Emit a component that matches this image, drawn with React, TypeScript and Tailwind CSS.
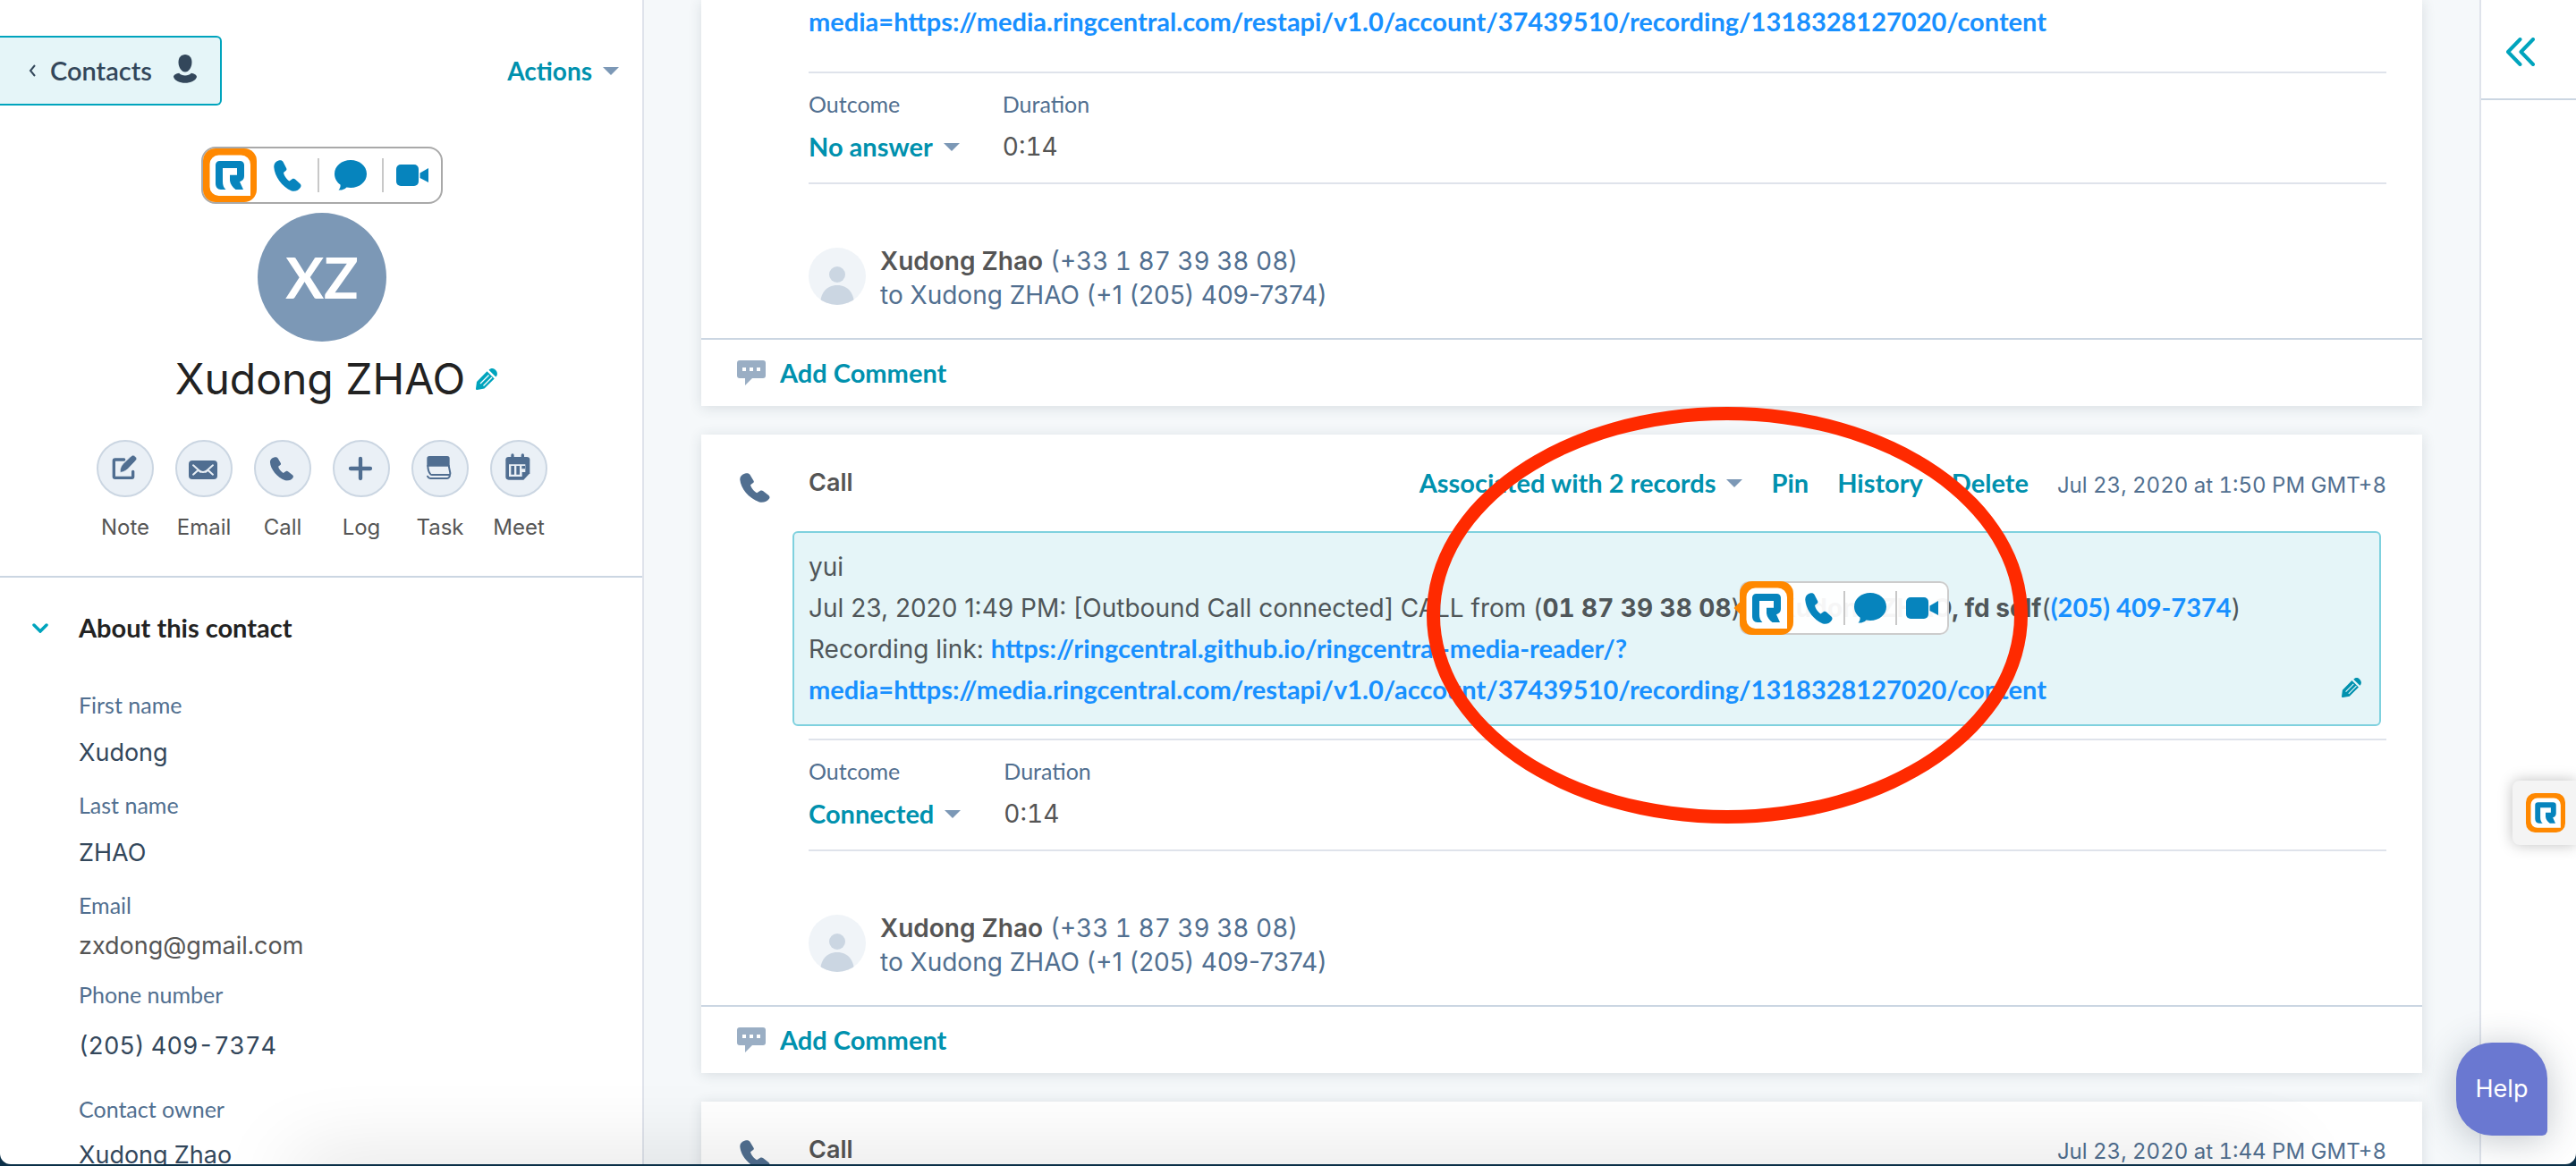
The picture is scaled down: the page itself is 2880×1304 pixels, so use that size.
import React from "react";

type IconProps = { className?: string };

const LATO = "font-['Lato',sans-serif]";

function Caret() {
  return (
    <svg viewBox="0 0 18 9" className="h-[9px] w-[18px] shrink-0 fill-[#7c98b6]" aria-hidden="true">
      <path d="M0 0h18L9 9z" />
    </svg>
  );
}

function PhoneIcon({ className }: IconProps) {
  return (
    <svg viewBox="0 0 31 35" preserveAspectRatio="none" className={className} fill="currentColor" aria-hidden="true">
      <path d="M5.5.6C2 1.8 0 4.5.3 8 1 18 9 30 20 34.5c4 1 8-.5 10-4 1-1.500.5-3-.5-4L24 21.500c-1-1-2.200-1-3-.5l-3.500 2.500c-3-2-6-6-6.500-9.500l3-2.500c.6-.7.5-1.500.2-2.300L10.500 2C9.500.2 7.500-.1 5.500.6z" />
    </svg>
  );
}

function BubbleIcon() {
  return (
    <svg viewBox="0 0 36 34" className="h-[34px] w-9" fill="currentColor" aria-hidden="true">
      <path d="M18 0c10 0 18 6.700 18 15.500S28 31 18 31c-1.600 0-3-.2-4.500-.5C11 33 8 33.800 4.500 33.500 6 32 7 29.500 6.500 27.500 2.500 24.700 0 20.500 0 15.500 0 6.700 8 0 18 0z" />
    </svg>
  );
}

function VideoIcon() {
  return (
    <svg viewBox="0 0 36 24" className="h-6 w-9" fill="currentColor" aria-hidden="true">
      <rect width="25" height="24" rx="5" />
      <path d="M26.500 9.500 36 4v16l-9.500-5z" />
    </svg>
  );
}

function RingLogo({ className }: IconProps) {
  return (
    <svg viewBox="0 0 60 60" className={className} aria-hidden="true">
      <rect width="60" height="60" rx="14" fill="#ff8800" />
      <path d="M17.500 7.500h25a10.500 10.500 0 0 1 10.500 10.500v35H17.500A10 10 0 0 1 7.500 43V17.500a10 10 0 0 1 10-10z" fill="#fff" />
      <path d="M18.500 14h23a4.500 4.500 0 0 1 4.500 4.500V31c0 3-2 5.500-5 6.200L45 46h-8.500c-3.500-2.500-6-6-6.500-10v-6.200h8V22H22v15c0 4 1 7 3.500 9H20c-4 0-6-3-6-7V18.500a4.500 4.500 0 0 1 4.500-4.500z" fill="#0684bd" />
    </svg>
  );
}

function PencilIcon({ className, line }: { className: string; line: string }) {
  return (
    <svg viewBox="0 0 24 24" className={className} fill="currentColor" aria-hidden="true">
      <path d="M1.500 24c-1 .2-1.600-.5-1.500-1.500L1 15 12.500 3.300l8.200 8.200L9.500 22.500z" />
      <path d="M14.500 1.800C16.500-.4 19.500-.6 21.700 1.600c2.700 2.400 3 5.400.6 8z" />
      <path d="M5 17 14.500 7.500M8.500 19.500 18 10" stroke={line} strokeWidth="1.300" fill="none" />
    </svg>
  );
}

function CallBar({ className, cells }: { className: string; cells: [string, string, string] }) {
  return (
    <div className={className}>
      <RingLogo className="h-[60px] w-[60px] shrink-0" />
      <button aria-label="Call with RingCentral" className={cells[0]}>
        <PhoneIcon className="h-[35px] w-[31px]" />
      </button>
      <span className="h-[38px] w-0.5 bg-[#c8c8c8]" />
      <button aria-label="Send a text message" className={cells[1]}>
        <BubbleIcon />
      </button>
      <span className="h-[38px] w-0.5 bg-[#c8c8c8]" />
      <button aria-label="Start a video meeting" className={cells[2]}>
        <VideoIcon />
      </button>
    </div>
  );
}

const actions: { label: string; art: React.ReactNode }[] = [
  {
    label: "Note",
    art: (
      <>
        <path d="M92 66H62q-4 0-4 4v53q0 4 4 4h56q4 0 4-4v-17" fill="none" stroke="currentColor" strokeWidth="10" strokeLinecap="round" strokeLinejoin="round" />
        <path d="M79 109c-1-12 3-21 9-28l24-23 6-5q5-4 9 0l6 6q4 4 0 8l-5 6-24 25c-7 6-16 10-25 11z" fill="currentColor" stroke="#eaf0f6" strokeWidth="2" />
      </>
    ),
  },
  {
    label: "Email",
    art: (
      <>
        <rect x="45" y="69" width="96" height="63" rx="12" fill="currentColor" />
        <path d="M60 85l19 17q14 12 28 0l19-17M60 116l17-15 7 6M126 116l-17-15-7 6" fill="none" stroke="#eaf0f6" strokeWidth="6" strokeLinecap="round" />
      </>
    ),
  },
  {
    label: "Call",
    art: (
      <svg x="53" y="57" width="80" height="80" viewBox="0 0 31 35" preserveAspectRatio="none">
        <path fill="currentColor" d="M5.5.6C2 1.8 0 4.5.3 8 1 18 9 30 20 34.5c4 1 8-.5 10-4 1-1.500.5-3-.5-4L24 21.500c-1-1-2.200-1-3-.5l-3.500 2.500c-3-2-6-6-6.500-9.500l3-2.500c.6-.7.5-1.500.2-2.300L10.500 2C9.500.2 7.500-.1 5.500.6z" />
      </svg>
    ),
  },
  {
    label: "Log",
    art: <path d="M60 96h66M93 63v66" stroke="currentColor" strokeWidth="13" strokeLinecap="round" />,
  },
  {
    label: "Task",
    art: (
      <>
        <path d="M60 54h60q8 0 8 8v27H52V62q0-8 8-8z" fill="currentColor" />
        <path d="M55 86c0 12 3 22 9 29q2 2 5 2h56q6 0 5-6l-5-25M54 122q3 7 9 7h56q7 0 10-9" fill="none" stroke="currentColor" strokeWidth="6" strokeLinecap="round" />
      </>
    ),
  },
  {
    label: "Meet",
    art: (
      <>
        <path d="M62 57h61q10 0 10 10v45l-21 22H62q-10 0-10-10V67q0-10 10-10z" fill="currentColor" />
        <path d="M75 51v12M109 51v12" stroke="currentColor" strokeWidth="10" strokeLinecap="round" />
        <path d="M63 82h55v26h-11v15H63z" fill="#eaf0f6" />
        <path d="M70 87h11v29H70zM88 87h11v29H88zM106 87h11v10h-11z" fill="currentColor" />
      </>
    ),
  },
];

const fields: { label: string; value: string; wrap: string; val: string }[] = [
  { label: "First name", value: "Xudong", wrap: "mt-[50px]", val: "mt-5 text-[#33475b]" },
  { label: "Last name", value: "ZHAO", wrap: "mt-6", val: "mt-5 text-[#33475b]" },
  { label: "Email", value: "zxdong@gmail.com", wrap: "mt-6", val: "mt-3 text-[#555555]" },
  { label: "Phone number", value: "(205) 409-7374", wrap: "mt-5", val: "mt-6 text-[#33475b]" },
  { label: "Contact owner", value: "Xudong Zhao", wrap: "mt-9", val: "mt-[18px] text-[#33475b]" },
];

function Sidebar() {
  return (
    <aside className="w-[720px] shrink-0 border-r-2 border-[#dfe3eb] bg-white pt-10">
      <div className="flex items-center justify-between pr-[26px]">
        <button className={`${LATO} flex h-[78px] items-center rounded-r-md border-2 border-l-0 border-[#00a4bd] bg-[#e5f5f8] pr-[26px] pl-8 text-[29px] leading-10 font-semibold text-[#33475b]`}>
          <svg viewBox="0 0 8 14" className="mr-4 h-3.5 w-2" fill="none" stroke="currentColor" strokeWidth="2" aria-hidden="true">
            <path d="M7 1 2 7l5 6" />
          </svg>
          Contacts
          <svg viewBox="0 0 26 32" className="mb-1 ml-6 h-8 w-[26px]" fill="currentColor" aria-hidden="true">
            <path d="M13 0c4.600 0 7.500 3.500 7.500 8.500 0 6-3.500 11-7.500 11s-7.500-5-7.500-11C5.500 3.500 8.400 0 13 0z" />
            <path d="M0 25c0-2.200 3-3.800 6.200-4.200 3 3.600 10.600 3.600 13.600 0C23 21.200 26 22.800 26 25c-2.500 9-23.500 9-26 0z" />
          </svg>
        </button>
        <button aria-haspopup="menu" className={`${LATO} flex items-center gap-3 text-[28px] leading-10 font-bold text-[#0091ae]`}>
          Actions
          <Caret />
        </button>
      </div>

      <div className="flex flex-col items-center pl-0.5">
        <CallBar
          className="mt-[46px] flex h-16 items-center rounded-2xl border-2 border-[#a9a9a9] bg-white text-[#0684bd]"
          cells={["flex w-[68px] justify-center", "flex w-[70px] justify-center", "flex w-16 justify-center"]}
        />
        <div className={`${LATO} mt-2.5 flex size-36 items-center justify-center rounded-full bg-[#7c98b6] text-[64px] leading-none font-bold text-white`}>
          XZ
        </div>
        <div className="mt-3 flex items-center gap-3 pl-8">
          <h1 className="text-5xl leading-[60px] text-[#222222]">Xudong ZHAO</h1>
          <button aria-label="Edit name" className="text-[#00a4bd]">
            <PencilIcon className="size-6" line="#fff" />
          </button>
        </div>
        <div className="mt-[38px] flex gap-6">
          {actions.map((a) => (
            <div key={a.label} className="flex w-16 flex-col items-center gap-[18px]">
              <button aria-labelledby={`action-${a.label}`} className="size-16 overflow-hidden rounded-full border-2 border-[#cbd6e2] bg-[#eaf0f6] text-[#506e91]">
                <svg viewBox="6 6 180 180" className="size-full" aria-hidden="true">
                  {a.art}
                </svg>
              </button>
              <span id={`action-${a.label}`} className="text-2xl leading-8 text-[#555555]">
                {a.label}
              </span>
            </div>
          ))}
        </div>
      </div>

      <section className="mt-[38px] border-t-2 border-[#cbd6e2] pt-9 pl-[88px]">
        <h2 className="-ml-[52px]">
          <button aria-expanded="true" className={`${LATO} flex items-center gap-[34px] text-[29px] leading-10 font-bold text-[#222222]`}>
            <svg viewBox="0 0 18 11" className="h-[11px] w-[18px]" fill="none" stroke="#00a4bd" strokeWidth="3.500" strokeLinecap="round" aria-hidden="true">
              <path d="M2 2l7 7 7-7" />
            </svg>
            About this contact
          </button>
        </h2>
        <dl>
          {fields.map((f) => (
            <div key={f.label} className={f.wrap}>
              <dt className={`${LATO} text-[25px] leading-8 text-[#516f90]`}>{f.label}</dt>
              <dd className={`text-[27px] leading-9 whitespace-nowrap tabular-nums ${f.val}`}>{f.value}</dd>
            </div>
          ))}
        </dl>
      </section>
    </aside>
  );
}

const MEDIA = "media=https://media.ringcentral.com/restapi/v1.0/account/37439510/recording/1318328127020/content";
const noteLink = `${LATO} text-[29px] leading-none font-bold text-[#1890ff]`;
const tealLink = `${LATO} text-[29px] leading-10 font-bold text-[#0091ae]`;

function CardHeader({ date, full }: { date: string; full?: boolean }) {
  return (
    <header className="flex h-[108px] items-start pt-[34px] pr-10 pl-[43px]">
      <PhoneIcon className="mt-[9px] h-[33px] w-[34px] shrink-0 text-[#516f90]" />
      <h3 className="ml-[43px] text-[27px] leading-10 font-semibold text-[#555555]">Call</h3>
      <div className="ml-auto flex items-baseline gap-8">
        {full && (
          <>
            <button aria-haspopup="menu" className={`flex items-center gap-3 ${tealLink}`}>
              Associated with 2 records
              <Caret />
            </button>
            <button className={tealLink}>Pin</button>
            <button className={tealLink}>History</button>
            <button className={tealLink}>Delete</button>
          </>
        )}
        <time className="text-2xl leading-[44px] text-[#516f90] tabular-nums">{date}</time>
      </div>
    </header>
  );
}

function CardBody({ outcome }: { outcome: string }) {
  return (
    <>
      <div className="mt-3.5 mr-10 ml-[120px] flex gap-12 border-y-2 border-[#dfe3eb] pt-[18px] pb-5">
        <div>
          <div className={`${LATO} text-[25px] leading-8 text-[#516f90]`}>Outcome</div>
          <button aria-haspopup="menu" className={`mt-3 flex items-center gap-3 ${tealLink}`}>
            {outcome}
            <Caret />
          </button>
        </div>
        <div>
          <div className={`${LATO} text-[25px] leading-8 text-[#516f90]`}>Duration</div>
          <div className="mt-3 text-[28px] leading-10 text-[#555555] tabular-nums">0:14</div>
        </div>
      </div>
      <div className="mt-[67px] ml-[120px] flex gap-4 pb-[29px]">
        <svg viewBox="0 0 64 64" className="mt-1 size-16" aria-hidden="true">
          <clipPath id={`avatar-${outcome.length}`}>
            <circle cx="32" cy="32" r="32" />
          </clipPath>
          <circle cx="32" cy="32" r="32" fill="#f0f4f8" />
          <g fill="#cbd6e2" clipPath={`url(#avatar-${outcome.length})`}>
            <circle cx="32" cy="30" r="9" />
            <path d="M13 64c0-12 6-22 19-22s19 10 19 22z" />
          </g>
        </svg>
        <p className="text-[28px] leading-[38px] text-[#516f90]">
          <strong className="font-semibold text-[#555555]">Xudong Zhao</strong>{" "}
          <span className="tabular-nums">(+33 1 87 39 38 08)</span>
          <br />
          to Xudong ZHAO (+1 (205) 409-7374)
        </p>
      </div>
      <footer className="flex h-[76px] items-center border-t-2 border-[#cbd6e2] pl-10">
        <button className={`flex items-center gap-4 ${tealLink}`}>
          <svg viewBox="0 0 32 28" className="h-7 w-8" aria-hidden="true">
            <path d="M3 0h26q3 0 3 3v14q0 3-3 3H17l-8 8v-8H3q-3 0-3-3V3q0-3 3-3z" fill="#9aaec4" />
            <path d="M6 8h4v4H6zM14 8h4v4h-4zM22 8h4v4h-4z" fill="#fff" />
          </svg>
          Add Comment
        </button>
      </footer>
    </>
  );
}

const card = "relative bg-white shadow-[0_2px_14px_rgba(45,62,80,0.14)]";

function Timeline() {
  return (
    <main className="flex min-w-0 flex-1 flex-col gap-8 bg-[#f5f8fa] px-16">
      <article className={card}>
        <div className="ml-[120px] pt-0.5 pb-[18px] text-[28px] leading-[46px]">
          <a href="#recording" className={noteLink}>
            {MEDIA}
          </a>
        </div>
        <CardBody outcome="No answer" />
      </article>

      <article className={card}>
        <CardHeader date="Jul 23, 2020 at 1:50 PM GMT+8" full />
        <div className="relative mr-[46px] ml-[102px] rounded-md border-2 border-[#7fd1de] bg-[#e5f5f8] pt-[15px] pb-[15px] pl-4 text-[28px] leading-[46px] whitespace-nowrap text-[#4f5659]">
          <div>yui</div>
          <div>
            Jul 23, 2020 1:49 PM: [Outbound Call connected] CALL from (
            <span className="relative inline-block font-bold tabular-nums">
              01 87 39 38 08
              <span className="absolute top-1/2 left-full z-10 ml-2.5 -translate-y-1/2">
                <span className="absolute top-1/2 -left-1 size-3 -translate-y-1/2 rotate-45 bg-[#ff8800]" />
                <CallBar
                  className="relative flex h-[60px] w-[234px] items-center rounded-[10px] bg-white/95 text-[#0684bd] inset-ring-2 inset-ring-[#cccccc]"
                  cells={["flex w-14 justify-center", "flex w-14 justify-center", "flex w-14 justify-center"]}
                />
              </span>
            </span>
            ) to <strong>Xudong ZHAO, fd self</strong>(
            <a href="tel:+12054097374" className={noteLink}>
              (205) 409-7374
            </a>
            )
          </div>
          <div>
            Recording link:{" "}
            <a href="#recording" className={noteLink}>
              https://ringcentral.github.io/ringcentral-media-reader/?
            </a>
          </div>
          <div>
            <a href="#recording" className={noteLink}>
              {MEDIA}
            </a>
          </div>
          <button aria-label="Edit note" className="absolute right-5 bottom-[30px] text-[#0091ae]">
            <PencilIcon className="size-[22px]" line="#e5f5f8" />
          </button>
        </div>
        <CardBody outcome="Connected" />
        <div className="pointer-events-none absolute -top-[31px] left-[811px] z-20 h-[466px] w-[672px] rounded-[50%] border-[15px] border-[#ff2a00]" />
      </article>

      <article className={card}>
        <CardHeader date="Jul 23, 2020 at 1:44 PM GMT+8" />
      </article>
    </main>
  );
}

export default function App() {
  return (
    <div className="h-screen overflow-hidden bg-[#0b3048] pb-0.5 font-['Inter',sans-serif]">
      <div className="relative flex h-full overflow-hidden rounded-b-xl">
        <Sidebar />
        <Timeline />
        <aside className="w-[108px] shrink-0 border-l-2 border-[#dfe3eb] bg-white">
          <div className="flex h-28 items-center border-b-2 border-[#cbd6e2] pt-1.5 pl-7">
            <button aria-label="Expand panel" className="text-[#00a4bd]">
              <svg viewBox="0 0 32 32" className="size-8" fill="none" stroke="currentColor" strokeWidth="4" strokeLinecap="round" strokeLinejoin="round" aria-hidden="true">
                <path d="M15.500 2 2 16l13.500 14M30 2 16.500 16 30 30" />
              </svg>
            </button>
          </div>
        </aside>

        <div className="pointer-events-none absolute top-full right-[330px] left-[330px] h-10 shadow-[0_0_90px_rgba(0,0,0,0.18)]" />

        <button aria-label="Open RingCentral widget" className="absolute top-[873px] right-0 flex h-[72px] w-[71px] items-center rounded-l-lg bg-[#f4f4f4] pl-[15px] shadow-[0_0_16px_rgba(0,0,0,0.25)]">
          <RingLogo className="size-11" />
        </button>
        <button className="absolute right-8 bottom-8 flex h-[104px] w-[102px] items-center justify-center rounded-[40px] rounded-br-md bg-[#6a78d1] text-[27px] text-white shadow-[0_4px_40px_rgba(45,62,80,0.3)]">
          Help
        </button>
      </div>
    </div>
  );
}
